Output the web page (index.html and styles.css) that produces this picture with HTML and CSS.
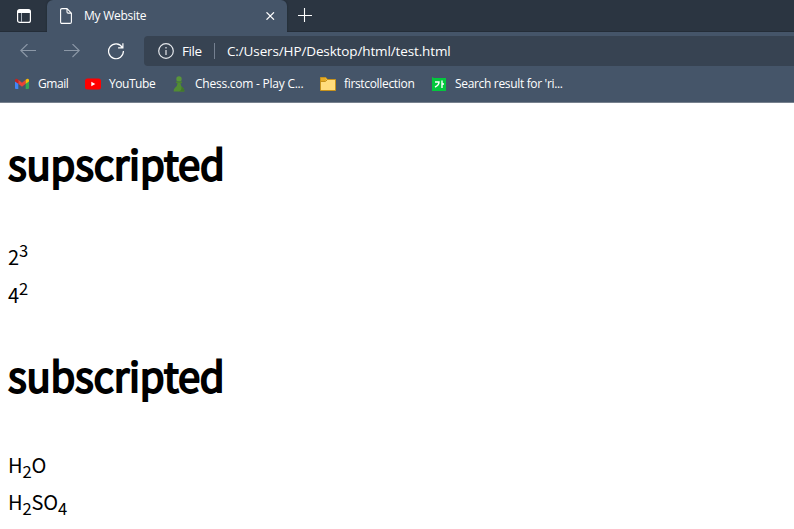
FILE: index.html
```
<!DOCTYPE html>
<html lang="en">
<head>
<meta charset="utf-8">
<title>My Website</title>
<link rel="stylesheet" href="styles.css">
</head>
<body>
<header class="browser">
  <div class="tabs">
    <div class="tab-menu">
      <svg width="14" height="14" viewBox="0 0 14 14"><rect x=".6" y=".6" width="12.8" height="12.8" rx="2" fill="none" stroke="#fff" stroke-width="1.2"/><path d="M1 1h12v3H1z" fill="#fff"/><path d="M4.5 4v9" stroke="#aab2bc"/></svg>
    </div>
    <div class="tab">
      <svg class="page-icon" width="12" height="16" viewBox="0 0 12 16"><path d="M2 .6h5l4.400 4.500V14q0 1.400-1.400 1.400H2Q.6 15.400 .6 14V2Q.6 .6 2 .6zM7 .6v3.300q0 1.200 1.200 1.200h3.200" fill="none" stroke="#fff" stroke-width="1.100"/></svg>
      <span class="tab-title">My Website</span>
      <svg class="close" width="9" height="8" viewBox="0 0 9 8"><path d="M.5 .3l7.500 7.400M8 .3L.5 7.700" stroke="#fff" stroke-width="1.200"/></svg>
    </div>
    <div class="new-tab">
      <svg width="14" height="14" viewBox="0 0 14 14"><path d="M6.500 0v14M0 7.500h14" stroke="#fff" stroke-width="1.100"/></svg>
    </div>
  </div>
  <div class="toolbar">
    <svg class="nav back" width="16" height="14" viewBox="0 0 16 14"><path d="M16 6.500H.8M7.500 0L.8 6.500l6.700 6.500" fill="none" stroke="#8c98a7" stroke-width="1.100"/></svg>
    <svg class="nav forward" width="16" height="14" viewBox="0 0 16 14"><path d="M0 6.500h15.200M8.500 0l6.700 6.500-6.700 6.500" fill="none" stroke="#8c98a7" stroke-width="1.100"/></svg>
    <svg class="nav reload" width="18" height="18" viewBox="0 0 18 18"><path d="M15.300 5.400A7.400 7.400 0 1 0 16.400 9M15.900 1.200v4.600h-4.800" fill="none" stroke="#fff" stroke-width="1.200"/></svg>
    <div class="address">
      <svg width="16" height="16" viewBox="0 0 16 16"><circle cx="8" cy="8" r="7.300" fill="none" stroke="#e4e7eb" stroke-width="1.200"/><path d="M8 7v5M8 4v1.400" stroke="#e4e7eb" stroke-width="1.200"/></svg>
      <span class="scheme">File</span>
      <span class="divider"></span>
      <span class="url">C:/Users/HP/Desktop/html/test.html</span>
    </div>
  </div>
  <nav class="bookmarks">
    <a class="bookmark gmail"><svg width="16" height="16" viewBox="0 0 16 16"><path d="M1 5v7q0 1 1 1h2.300V7z" fill="#4285f4"/><path d="M15 5v7q0 1-1 1h-2.300V7z" fill="#34a853"/><path d="M4.300 3.800L8 6.700l3.700-2.900v4L8 10.700 4.300 7.800z" fill="#ea4335"/><path d="M1 5.500V4q.8-2.600 3.300-.2v4z" fill="#c5221f"/><path d="M15 5.500V4q-.8-2.600-3.300-.2v4z" fill="#fbbc04"/></svg><span>Gmail</span></a>
    <a class="bookmark youtube"><svg width="16" height="16" viewBox="0 0 16 16"><rect y="2.500" width="16" height="11" rx="2.500" fill="#f00"/><path d="M6.300 5.700v4.600L10.300 8z" fill="#fff"/></svg><span>YouTube</span></a>
    <a class="bookmark chess"><svg width="16" height="16" viewBox="0 0 16 16"><circle cx="8" cy="2.900" r="2.700" fill="#59953a"/><path d="M5 5.500h6v1.600H5z" fill="#4b8530"/><path d="M6.500 7h3Q9.500 10 12 11.800 13.400 13 13.400 15.500H2.600Q2.600 13 4 11.800 6.500 10 6.500 7z" fill="#528c34"/><path d="M8 15.500Q11 14.500 10.500 10.300L12 11.800Q13.400 13 13.400 15.500z" fill="#42782a"/></svg><span>Chess.com - Play C...</span></a>
    <a class="bookmark collection"><svg width="16" height="16" viewBox="0 0 16 16"><path d="M.5 1.500h5.300l1.700 2h8v11H.5z" fill="#ffdc7c" stroke="#c6921b"/><path d="M1 2h4.500l1.300 1.500L5.500 5H1z" fill="#e5ab25"/><path d="M.5 5.500h5l2-2" fill="none" stroke="#c6921b"/></svg><span>firstcollection</span></a>
    <a class="bookmark search"><svg width="16" height="16" viewBox="0 0 16 16"><path d="M1 1l2 1h12v13H1z" fill="#03c83d"/><path d="M4 6h4q0 3.300-4 5M11 4.500v7.500M11 8h2" fill="none" stroke="#fff" stroke-width="1.400"/></svg><span>Search result for 'ri...</span></a>
  </nav>
</header>
<main>
  <h1>supscripted</h1>
  <div class="powers">
    <p>2<sup>3</sup></p>
    <p>4<sup>2</sup></p>
  </div>
  <h1>subscripted</h1>
  <div class="formulas">
    <p>H<sub>2</sub>O</p>
    <p>H<sub>2</sub>SO<sub>4</sub></p>
  </div>
</main>
</body>
</html>
```
FILE: styles.css
```
* { box-sizing: border-box; }
body {
  margin: 0;
  height: 529px;
  overflow: hidden;
  background: #fff;
  color: #000;
  font-family: "Noto Sans CJK KR", sans-serif;
}
svg { display: block; flex: none; }
.browser {
  height: 103px;
  background: #455569;
  border-bottom: 1px solid #77818e;
  color: #fff;
  font-family: "Open Sans", sans-serif;
  font-size: 12px;
  white-space: nowrap;
}
.tabs { display: flex; height: 32px; background: #2b3541; border-bottom: 1px solid #242d38; }
.tab-menu { width: 47px; padding: 9px 0 0 17px; }
.tab {
  display: flex;
  align-items: center;
  width: 240px;
  height: 32px;
  padding: 0 12px 0 13px;
  background: #455569;
  border-radius: 6px 6px 0 0;
  box-shadow: 0 0 2px #1d2630;
  clip-path: inset(0 -3px 0 -3px);
}
.tab-title { margin-left: 12px; padding-bottom: 1px; letter-spacing: -.25px; }
.close { margin-left: auto; }
.new-tab { padding: 8px 0 0 11px; }
.toolbar { display: flex; align-items: center; height: 38px; padding: 0 0 0 20px; }
.forward { margin-left: 28px; }
.reload { margin-left: 27px; }
.address {
  display: flex;
  align-items: center;
  flex: 1;
  height: 30px;
  margin-left: 19px;
  padding-left: 14px;
  border-radius: 4px 0 0 4px;
  background: #374352;
  font-size: 13.500px;
}
.scheme { width: 25px; margin-left: 8px; letter-spacing: -.4px; }
.divider { width: 1px; height: 16px; margin: 0 12px 0 7px; background: #758090; }
.url { letter-spacing: -.13px; }
.bookmarks { display: flex; height: 28px; padding-left: 14px; }
.bookmark { display: flex; align-items: center; gap: 8px; letter-spacing: -.33px; }
.bookmark span { padding-bottom: 1px; }
.gmail { width: 71px; letter-spacing: -.45px; }
.youtube { width: 86px; letter-spacing: -.45px; }
.chess { width: 149px; letter-spacing: -.24px; }
.collection { width: 111px; }
main { padding: 30px 8px 0; }
h1 {
  margin: 0;
  font-size: 40px;
  line-height: 60px;
  font-weight: 400;
  letter-spacing: -.220px;
  -webkit-text-stroke: 1.900px #000;
}
p { margin: 0; font-size: 20px; }
sup, sub { font-size: 16.600px; line-height: 0; }
sup { vertical-align: 8px; }
sub { vertical-align: -4.500px; }
.powers { padding: 45px 0 31px; line-height: 38px; }
.formulas { padding-top: 41px; line-height: 37px; letter-spacing: -.15px; }
```
